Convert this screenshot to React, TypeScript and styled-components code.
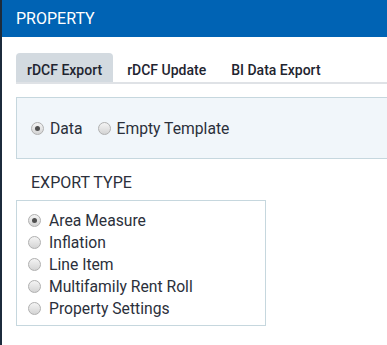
import { FC, useState } from 'react';
import styled, { createGlobalStyle } from 'styled-components';

const GlobalStyle = createGlobalStyle`
    html, body {
        margin: 0;
        padding: 0;
        background: #ffffff;
    }

    body {
        font-family: Roboto, 'Liberation Sans', Arial, sans-serif;
        color: #2b303b;
    }
`;

const tabs = ['rDCF Export', 'rDCF Update', 'BI Data Export'];
const modes = ['Data', 'Empty Template'];
const exportTypes = ['Area Measure', 'Inflation', 'Line Item', 'Multifamily Rent Roll', 'Property Settings'];

type RadioProps = {
    label: string;
    checked: boolean;
    inline?: boolean;
    onSelect: () => void;
};

type ActiveProps = {
    $active: boolean;
};

type InlineProps = {
    $inline: boolean;
};

const Radio: FC<RadioProps> = ({ label, checked, inline = false, onSelect }) => (
    <RadioLabel $inline={inline} onClick={onSelect}>
        <RadioCircle $active={checked} />
        {label}
    </RadioLabel>
);

export default function App() {
    const [tab, setTab] = useState(0);
    const [mode, setMode] = useState(0);
    const [exportType, setExportType] = useState(0);

    return (
        <Page>
            <GlobalStyle />
            <Header>PROPERTY</Header>
            <Body>
                <TabBar>
                    {tabs.map((name, i) => (
                        <Tab key={name} $active={tab === i} onClick={() => setTab(i)}>
                            {name}
                        </Tab>
                    ))}
                </TabBar>
                <ModeBox>
                    {modes.map((name, i) => (
                        <Radio
                            key={name}
                            inline
                            label={name}
                            checked={mode === i}
                            onSelect={() => setMode(i)}
                        />
                    ))}
                </ModeBox>
                <SectionTitle>EXPORT TYPE</SectionTitle>
                <TypeList>
                    {exportTypes.map((name, i) => (
                        <Radio
                            key={name}
                            label={name}
                            checked={exportType === i}
                            onSelect={() => setExportType(i)}
                        />
                    ))}
                </TypeList>
            </Body>
        </Page>
    );
}

const Page = styled.div`
    min-height: 345px;
    border-left: 2px solid #1c2b3c;
    box-sizing: border-box;
    overflow: hidden;
`;

const Header = styled.div`
    height: 37px;
    display: flex;
    align-items: center;
    padding-left: 14px;
    background: #0063b4;
    color: #ffffff;
    font-size: 16px;
`;

const Body = styled.div`
    padding: 16px 0 0 14px;
`;

const TabBar = styled.div`
    display: flex;
    border-bottom: 2px solid #dfe2e6;
`;

const Tab = styled.button<ActiveProps>`
    height: 29px;
    padding: 5px 11px 0;
    margin-right: 3px;
    border: none;
    border-radius: 4px 4px 0 0;
    background: ${({ $active }) => ($active ? '#d3dae0' : 'transparent')};
    color: #1f2530;
    font-family: inherit;
    font-size: 14px;
    font-weight: 500;
    cursor: pointer;
`;

const ModeBox = styled.div`
    display: flex;
    align-items: center;
    gap: 15px;
    height: 60px;
    margin-top: 13px;
    padding-left: 14px;
    margin-right: -4px;
    background: #f1f6fa;
    border: 1px solid #c6d7de;
    border-right: none;
`;

const RadioLabel = styled.label<InlineProps>`
    display: flex;
    align-items: center;
    gap: ${({ $inline }) => ($inline ? '6px' : '8px')};
    height: 22px;
    font-size: 15.7px;
    cursor: pointer;
`;

const RadioCircle = styled.span<ActiveProps>`
    position: relative;
    width: 11px;
    height: 11px;
    border-radius: 50%;
    border: 1px solid #b0b0b0;
    background: linear-gradient(#f4f4f4, #d4d4d4);
    flex-shrink: 0;

    &::after {
        content: '';
        display: ${({ $active }) => ($active ? 'block' : 'none')};
        position: absolute;
        left: 3px;
        top: 3px;
        width: 5px;
        height: 5px;
        border-radius: 50%;
        background: #4f4f4f;
    }
`;

const SectionTitle = styled.div`
    margin: 15px 0 0 15px;
    height: 18px;
    line-height: 18px;
    font-size: 16px;
`;

const TypeList = styled.div`
    width: 237px;
    margin-top: 8px;
    padding: 8px 0 6px 11px;
    border: 1px solid #c6d7de;
`;
